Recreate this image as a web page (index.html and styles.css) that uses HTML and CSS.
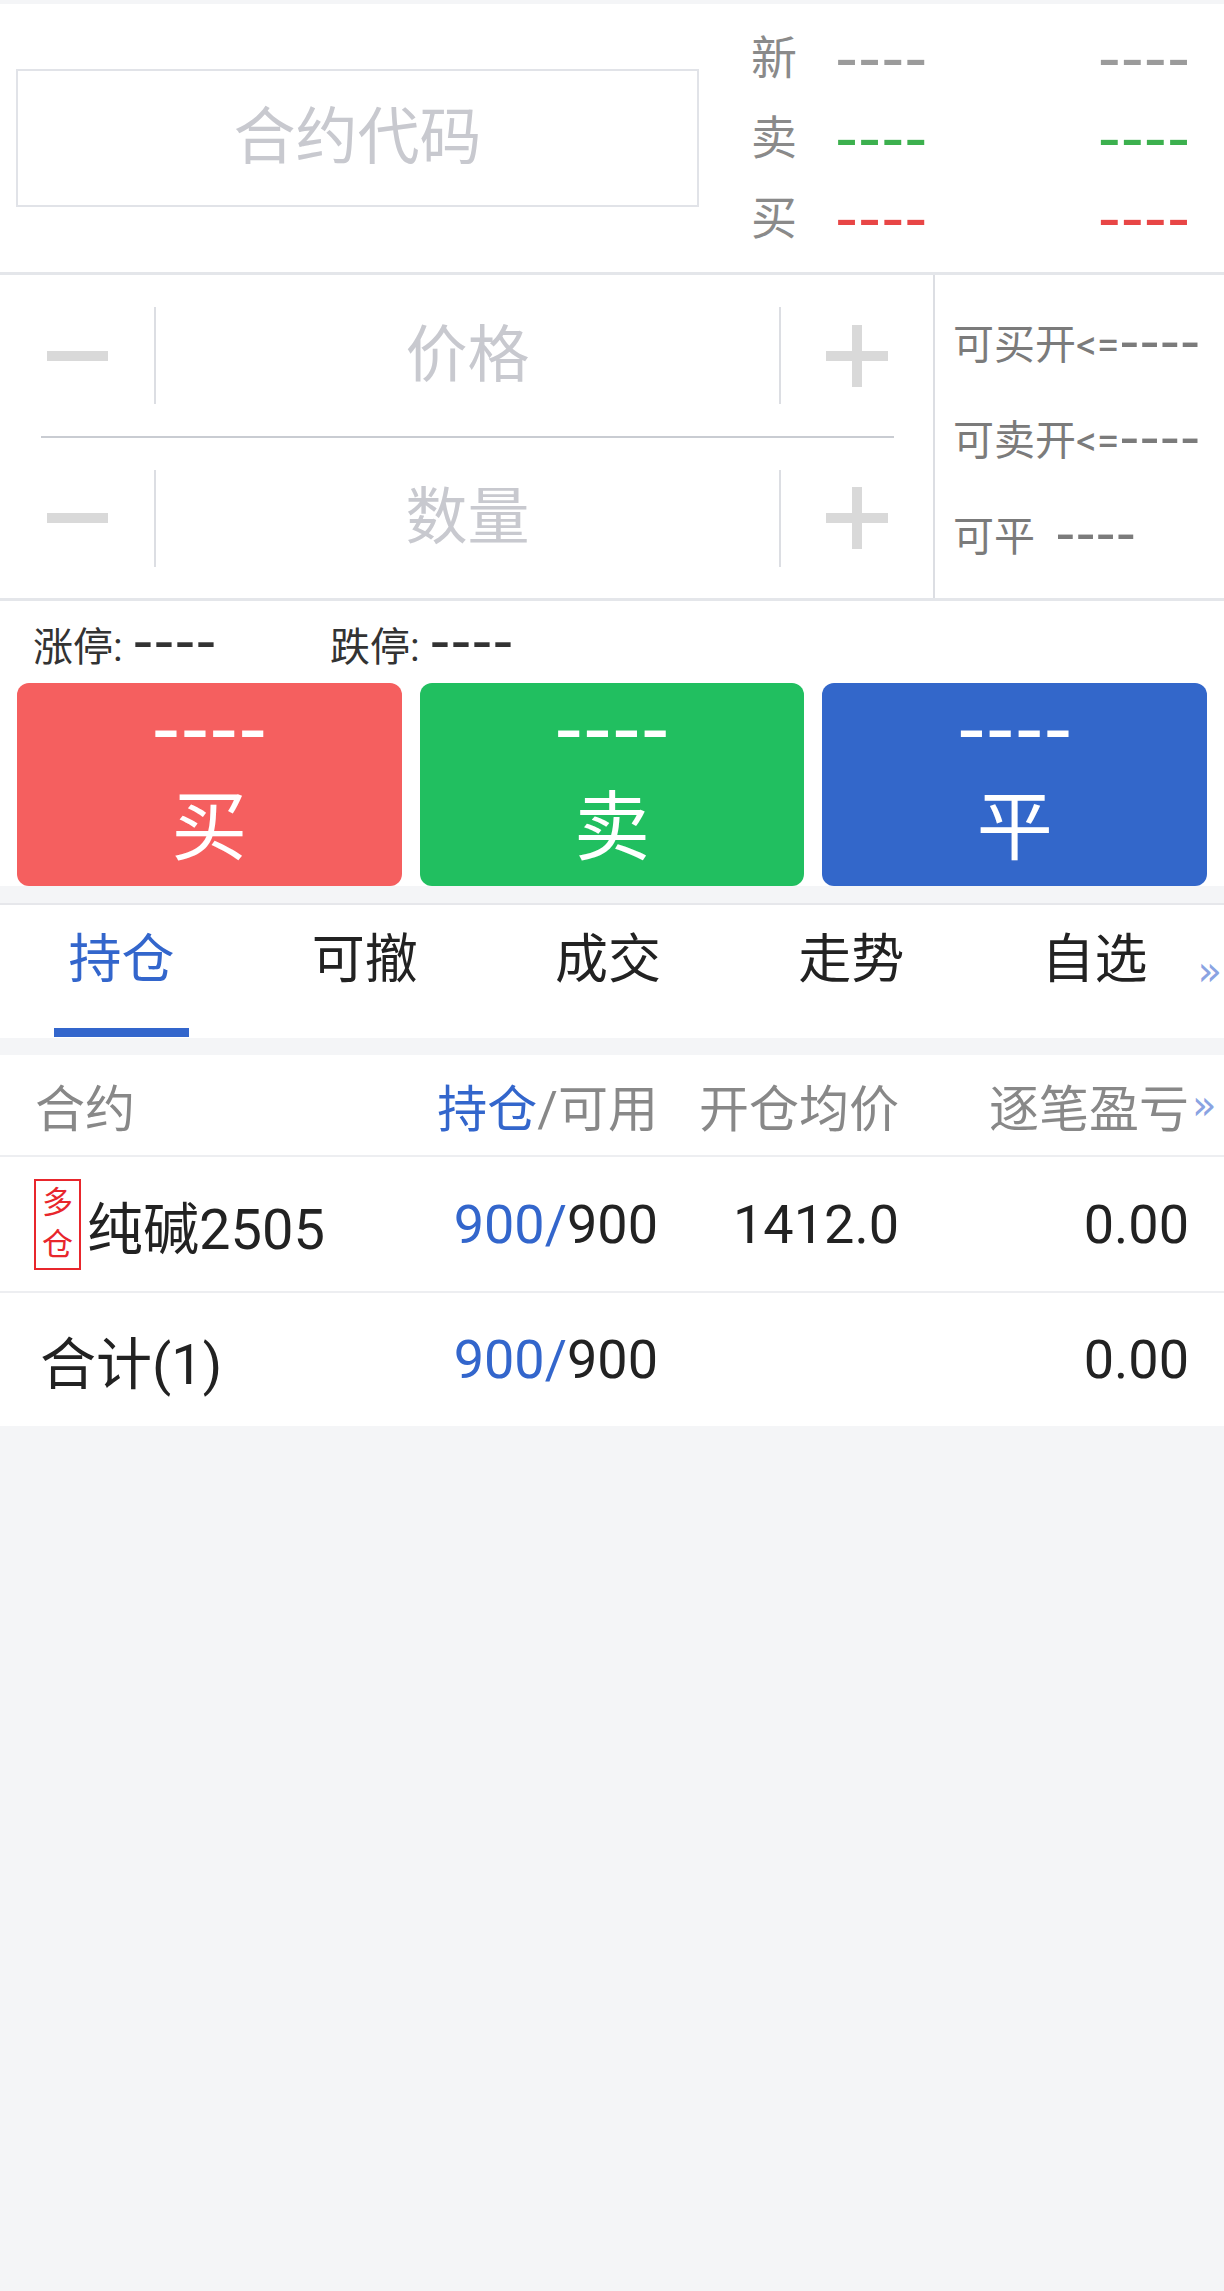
FILE: index.html
```html
<!DOCTYPE html>
<html lang="zh-CN">
<head>
<meta charset="utf-8">
<title>交易</title>
<link rel="stylesheet" href="styles.css">
</head>
<body>
<div class="page">
  <section class="quote">
    <div class="code-box">合约代码</div>
    <div class="quote-list">
      <div class="q-row"><span class="q-label">新</span><span class="dash c-gray">----</span><span class="dash c-gray">----</span></div>
      <div class="q-row"><span class="q-label">卖</span><span class="dash c-green">----</span><span class="dash c-green">----</span></div>
      <div class="q-row"><span class="q-label">买</span><span class="dash c-red">----</span><span class="dash c-red">----</span></div>
    </div>
  </section>

  <section class="order">
    <div class="order-left">
      <div class="step-row">
        <span class="minus"></span>
        <span class="step-sep"></span>
        <span class="step-label">价格</span>
        <span class="step-sep"></span>
        <span class="plus"></span>
      </div>
      <div class="step-divider"></div>
      <div class="step-row step-row-2">
        <span class="minus"></span>
        <span class="step-sep"></span>
        <span class="step-label">数量</span>
        <span class="step-sep"></span>
        <span class="plus"></span>
      </div>
    </div>
    <div class="order-right">
      <div class="avail">可买开&lt;=<span class="dash">----</span></div>
      <div class="avail">可卖开&lt;=<span class="dash">----</span></div>
      <div class="avail">可平 <span class="dash gap">----</span></div>
    </div>
  </section>

  <section class="trade">
    <div class="limits">
      <span class="limit">涨停: <span class="dash">----</span></span>
      <span class="limit">跌停: <span class="dash">----</span></span>
    </div>
    <div class="buttons">
      <div class="btn btn-buy"><span class="dash">----</span><span class="btn-label">买</span></div>
      <div class="btn btn-sell"><span class="dash">----</span><span class="btn-label">卖</span></div>
      <div class="btn btn-close"><span class="dash">----</span><span class="btn-label">平</span></div>
    </div>
  </section>

  <nav class="tabs">
    <div class="tab active"><span class="tab-text">持仓</span><span class="tab-bar"></span></div>
    <div class="tab"><span class="tab-text">可撤</span></div>
    <div class="tab"><span class="tab-text">成交</span></div>
    <div class="tab"><span class="tab-text">走势</span></div>
    <div class="tab"><span class="tab-text">自选</span></div>
    <span class="more tabs-more">»</span>
  </nav>

  <section class="table">
    <div class="t-row t-head">
      <span>合约</span>
      <span class="num"><span class="blue">持仓</span>/可用</span>
      <span class="num">开仓均价</span>
      <span class="num th-last">逐笔盈亏<span class="more head-more">»</span></span>
    </div>
    <div class="t-row t-body">
      <span class="pos-name"><span class="badge"><span>多</span><span>仓</span></span><span class="name">纯碱2505</span></span>
      <span class="num"><span class="blue">900/</span>900</span>
      <span class="num">1412.0</span>
      <span class="num">0.00</span>
    </div>
    <div class="t-row t-body t-total">
      <span class="total-label">合计(1)</span>
      <span class="num"><span class="blue">900/</span>900</span>
      <span class="num"></span>
      <span class="num">0.00</span>
    </div>
  </section>
</div>
</body>
</html>
```

FILE: styles.css
```css
* { box-sizing: border-box; }

html, body { margin: 0; }

body {
  background: #f4f5f7;
  width: 1224px;
  min-height: 2291px;
  font-family: Roboto, "Noto Sans CJK SC", sans-serif;
  color: #222;
}

.page { padding-top: 4px; }

.dash {
  font-family: "DejaVu Sans", sans-serif;
  white-space: nowrap;
  line-height: 1;
}

/* quote header */
.quote {
  background: #fff;
  height: 271px;
  border-bottom: 3px solid #e4e6ea;
  display: flex;
  align-items: center;
}

.code-box {
  margin-left: 16px;
  width: 683px;
  height: 138px;
  border: 2px solid #e1e3e8;
  display: flex;
  align-items: center;
  justify-content: center;
  font-size: 62px;
  line-height: 1;
  color: #c8c9cf;
}

.quote-list {
  margin-left: 52px;
  width: 439px;
  display: flex;
  flex-direction: column;
}

.q-row {
  display: grid;
  grid-template-columns: 84px 1fr auto;
  align-items: center;
  height: 80px;
}

.q-label { font-size: 46px; line-height: 1; color: #8a8a8a; }
.q-row .dash { font-size: 64px; }

.c-gray { color: #9b9b9b; }
.c-green { color: #3cb04e; }
.c-red { color: #e84646; }

/* order entry */
.order {
  background: #fff;
  display: flex;
  border-bottom: 3px solid #e4e6ea;
}

.order-left { width: 933px; }

.step-row {
  display: grid;
  grid-template-columns: 154px 2px 1fr 2px 152px;
  align-items: center;
  height: 161px;
}

.step-row-2 { height: 160px; }

.step-sep { height: 97px; background: #dcdee3; }

.minus {
  justify-self: center;
  width: 61px;
  height: 10px;
  background: #d9d9d9;
}

.plus {
  justify-self: center;
  width: 62px;
  height: 62px;
  position: relative;
}

.plus::before,
.plus::after {
  content: "";
  position: absolute;
  background: #d9d9d9;
}

.plus::before { left: 0; top: 26px; width: 62px; height: 10px; }
.plus::after { left: 26px; top: 0; width: 10px; height: 62px; }

.step-label {
  text-align: center;
  font-size: 62px;
  line-height: 1;
  color: #c8c9cf;
}

.step-divider {
  height: 2px;
  margin: 0 39px 0 41px;
  background: #c9ccd2;
}

.order-right {
  flex: 1;
  border-left: 2px solid #dcdee3;
  padding: 18px 0 0 18px;
}

.avail {
  height: 96px;
  display: flex;
  align-items: center;
  font-size: 41px;
  color: #7b7b7b;
  white-space: pre;
}

.avail .dash { font-size: 56px; }
.avail .gap { margin-left: 10px; }

/* trade buttons */
.trade {
  background: #fff;
  margin-bottom: 17px;
}

.limits {
  height: 82px;
  display: flex;
  align-items: center;
  padding-left: 33px;
  font-size: 40px;
  color: #333;
}

.limit { width: 297px; white-space: nowrap; }
.limit .dash { font-size: 58px; }

.buttons {
  display: grid;
  grid-template-columns: repeat(3, 1fr);
  gap: 18px;
  padding: 0 17px;
}

.btn {
  height: 203px;
  border-radius: 12px;
  color: #fff;
  display: flex;
  flex-direction: column;
  align-items: center;
}

.btn .dash { font-size: 80px; line-height: 50px; margin-top: 21px; }
.btn-label { font-size: 76px; line-height: 90px; margin-top: 29px; }

.btn-buy { background: #f55f5f; }
.btn-sell { background: #21bf60; }
.btn-close { background: #3367ca; }

/* tabs */
.tabs {
  background: #fff;
  border-top: 2px solid #e6e7eb;
  height: 135px;
  display: flex;
  padding-right: 8px;
  position: relative;
}

.tab {
  flex: 1;
  display: flex;
  flex-direction: column;
  align-items: center;
  font-size: 53px;
  color: #222;
}

.tab-text { line-height: 70px; margin-top: 20px; }
.tab.active { color: #3366cc; }

.tab-bar {
  width: 135px;
  height: 9px;
  background: #3366cc;
  margin-top: 33px;
}

.more {
  font-family: "DejaVu Sans", sans-serif;
  font-size: 40px;
  line-height: 1;
  color: #8aa3e2;
}

.tabs-more {
  position: absolute;
  right: 2px;
  top: 46px;
}

/* positions table */
.table {
  background: #fff;
  margin-top: 17px;
}

.t-row {
  display: grid;
  grid-template-columns: 1fr 240px 241px 290px;
  align-items: center;
  padding: 0 35px;
  border-bottom: 2px solid #edeef1;
}

.num { text-align: right; white-space: nowrap; }

.t-head { height: 102px; font-size: 50px; color: #888; }
.t-body { height: 136px; font-size: 54px; color: #222; }
.t-total { height: 133px; border-bottom: none; }

.blue { color: #3366cc; }

.th-last { position: relative; }

.head-more {
  position: absolute;
  left: calc(100% + 3px);
  top: 50%;
  transform: translateY(-50%);
}

.pos-name { display: flex; align-items: center; }

.badge {
  width: 47px;
  height: 91px;
  border: 2px solid #e8262c;
  color: #e8262c;
  font-size: 31px;
  line-height: 42px;
  display: flex;
  flex-direction: column;
  align-items: center;
  justify-content: center;
  margin-left: -1px;
}

.name { margin-left: 6px; font-size: 56px; }

.total-label { padding-left: 5px; font-size: 56px; }
```
